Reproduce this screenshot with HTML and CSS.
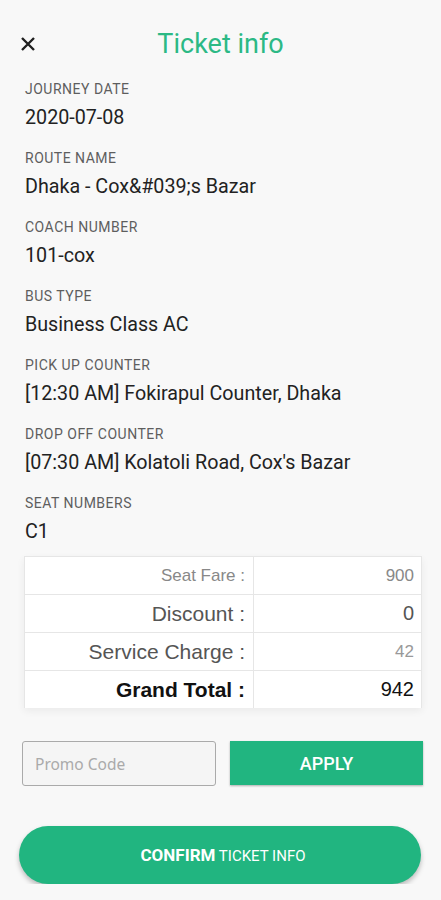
FILE: index.html
```html
<!DOCTYPE html>
<html lang="en">
<head>
  <meta charset="UTF-8">
  <title>Ticket info</title>
  <link rel="stylesheet" href="styles.css">
</head>
<body>
  <div class="header">
    <button class="close" aria-label="Close">
      <svg width="14" height="14" viewBox="0 0 14 14"><path d="M1 1L13 13M13 1L1 13" stroke="#1f1f1f" stroke-width="2.4" fill="none"/></svg>
    </button>
    <h1>Ticket info</h1>
    <span></span>
  </div>

  <div class="fields">
    <div class="field">
      <div class="label">JOURNEY DATE</div>
      <div class="value">2020-07-08</div>
    </div>
    <div class="field">
      <div class="label">ROUTE NAME</div>
      <div class="value">Dhaka - Cox&amp;#039;s Bazar</div>
    </div>
    <div class="field">
      <div class="label">COACH NUMBER</div>
      <div class="value">101-cox</div>
    </div>
    <div class="field">
      <div class="label">BUS TYPE</div>
      <div class="value">Business Class AC</div>
    </div>
    <div class="field">
      <div class="label">PICK UP COUNTER</div>
      <div class="value">[12:30 AM] Fokirapul Counter, Dhaka</div>
    </div>
    <div class="field">
      <div class="label">DROP OFF COUNTER</div>
      <div class="value">[07:30 AM] Kolatoli Road, Cox's Bazar</div>
    </div>
    <div class="field">
      <div class="label">SEAT NUMBERS</div>
      <div class="value">C1</div>
    </div>
  </div>

  <table class="fare">
    <tr class="seat">
      <td class="name">Seat Fare :</td>
      <td class="amount">900</td>
    </tr>
    <tr>
      <td class="name">Discount :</td>
      <td class="amount">0</td>
    </tr>
    <tr>
      <td class="name">Service Charge :</td>
      <td class="amount light">42</td>
    </tr>
    <tr class="total">
      <td class="name">Grand Total :</td>
      <td class="amount">942</td>
    </tr>
  </table>

  <div class="promo">
    <input type="text" placeholder="Promo Code">
    <button class="apply">APPLY</button>
  </div>

  <button class="confirm"><b>CONFIRM</b> TICKET INFO</button>
</body>
</html>
```

FILE: styles.css
```css
body {
  margin: 0;
  background: #f8f8f8;
  font-family: Roboto, "Liberation Sans", sans-serif;
  color: #222;
}
.header {
  display: grid;
  grid-template-columns: 1fr auto 1fr;
  align-items: center;
  height: 79px;
}
.close {
  justify-self: start;
  margin: 0 0 0 19px;
  padding: 2px;
  border: none;
  background: none;
  line-height: 0;
  position: relative;
  top: 4px;
}
h1 {
  margin: 0;
  font-size: 27px;
  font-weight: 400;
  color: #2cb985;
  position: relative;
  top: 4px;
}
.fields {
  padding-left: 25px;
}
.field {
  margin-bottom: 16px;
}
.field:last-child {
  margin-bottom: 10px;
}
.label {
  font-size: 14px;
  line-height: 20px;
  letter-spacing: 0.5px;
  color: #5e5e5e;
}
.value {
  margin-top: 5px;
  font-size: 19.7px;
  line-height: 28px;
  color: #222;
}
.fare {
  width: 398px;
  margin: 0 19px 0 24px;
  border-collapse: collapse;
  background: #fff;
  font-family: "Liberation Sans", Arial, sans-serif;
  box-shadow: 0 3px 8px rgba(0, 0, 0, 0.06);
}
.fare td {
  height: 37px;
  padding: 0 8px;
  border: 1px solid #e6e6e6;
  text-align: right;
  color: #555;
  font-size: 21px;
}
.fare .name {
  width: 212px;
}
.fare .seat td {
  font-size: 17px;
  color: #888;
}
.fare .amount {
  padding-right: 7px;
  font-size: 20px;
}
.fare .light {
  font-size: 17px;
  color: #999;
}
.fare .total td {
  color: #111;
  border-bottom: none;
}
.fare .total .name {
  font-weight: bold;
}
.promo {
  display: flex;
  gap: 14px;
  margin: 33px 0 0 22px;
}
.promo input {
  box-sizing: border-box;
  width: 194px;
  height: 45px;
  padding: 0 12px;
  border: 1px solid #aaa;
  border-radius: 3px;
  background: #f5f5f5;
  font-family: "Noto Sans", sans-serif;
  font-size: 15.5px;
}
.promo input::placeholder {
  color: #aaa;
}
.apply {
  width: 193px;
  height: 44px;
  border: none;
  background: #21b580;
  color: #fff;
  font-family: Roboto, sans-serif;
  font-size: 18px;
  font-weight: 500;
  box-shadow: 0 1px 2px rgba(0, 0, 0, 0.3);
}
.confirm {
  display: block;
  width: 402px;
  height: 58px;
  margin: 40px 0 0 19px;
  padding-left: 12px;
  border: none;
  border-radius: 29px;
  background: #21b580;
  color: #fff;
  font-family: Roboto, sans-serif;
  font-size: 15px;
  box-shadow: 0 3px 5px rgba(0, 0, 0, 0.25);
}
.confirm b {
  font-size: 17px;
}
```
